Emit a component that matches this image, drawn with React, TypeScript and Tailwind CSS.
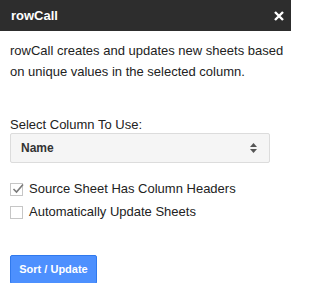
export default function App() {
  return (
    <div className="h-[283px] w-[291px] overflow-hidden bg-white font-['Liberation_Sans',Arial,sans-serif] text-[13px] text-[#222]">
      <div className="flex h-[31px] items-center justify-between bg-[#2d2d2d] pl-[11px] pr-[7px]">
        <span className="text-[13px] font-bold text-white">rowCall</span>
        <svg width="10" height="10" viewBox="0 0 10 10">
          <path d="M1 1 L9 9 M9 1 L1 9" stroke="#fff" strokeWidth="2.4" />
        </svg>
      </div>

      <div className="px-[10px] pt-[9px]">
        <p className="-mr-[8px] text-[13px] leading-[21px]">
          rowCall creates and updates new sheets based on unique values in the selected column.
        </p>

        <div className="mt-[34px] leading-[17px]">Select Column To Use:</div>
        <div className="flex h-[30px] w-[260px] items-center justify-between rounded-[2px] border border-[#dcdcdc] bg-[#f5f5f5] pl-[10px] pr-[12px]">
          <span className="text-[12px] font-bold text-[#333]">Name</span>
          <svg width="7" height="10" viewBox="0 0 7 10">
            <path d="M3.5 0 L7 4 L0 4 Z M0 6 L7 6 L3.5 10 Z" fill="#555" />
          </svg>
        </div>

        <div className="mt-[19px] flex flex-col gap-[9px]">
          <label className="flex items-center gap-[6px]">
            <span className="relative flex h-[13px] w-[13px] items-center justify-center border border-[#c6c6c6] bg-white">
              <svg width="13" height="13" viewBox="0 0 13 13" className="absolute left-[1px] top-[-2px]">
                <path d="M1.5 7 L4.5 10 L11 2.5" stroke="#7a7a7a" strokeWidth="1.6" fill="none" />
              </svg>
            </span>
            <span className="leading-[14px]">Source Sheet Has Column Headers</span>
          </label>
          <label className="flex items-center gap-[6px]">
            <span className="h-[13px] w-[13px] border border-[#c6c6c6] bg-white" />
            <span className="leading-[14px]">Automatically Update Sheets</span>
          </label>
        </div>

        <button className="mt-[36px] h-[29px] w-[87px] rounded-[2px] border border-[#3079ed] bg-[#4d90fe] text-[11px] font-bold text-white">
          Sort / Update
        </button>
      </div>
    </div>
  )
}
